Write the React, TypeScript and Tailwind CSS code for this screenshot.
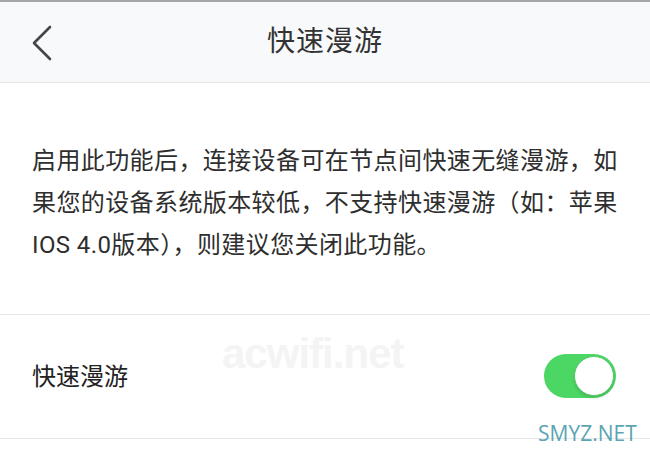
import React from "react";

export default function App() {
  const font = { fontFamily: 'Roboto, "Noto Sans CJK SC", sans-serif' };
  return (
    <div className="relative w-[650px] h-[455px] overflow-hidden bg-white" style={font}>
      <div className="h-[2px] bg-[#a6a6a6]" />
      <div className="relative h-[81px] bg-[#f8f9fb] border-b border-[#e4e5e7] flex items-center justify-center">
        <svg className="absolute left-[30px] top-[22px]" width="26" height="40" viewBox="0 0 26 40">
          <polyline points="20,3 4,19 20,35" fill="none" stroke="#454545" strokeWidth="2.6" strokeLinecap="round" strokeLinejoin="round" />
        </svg>
        <span className="text-[28px] leading-none text-[#333333] tracking-[1px]">快速漫游</span>
      </div>
      <div className="pt-[57px] pb-[48px] pl-[32px] pr-[20px] text-[24px] leading-[42px] text-[#2e2e2e] tracking-[0.4px]">
        启用此功能后，连接设备可在节点间快速无缝漫游，如<br />
        果您的设备系统版本较低，不支持快速漫游（如：苹果<br />
        IOS 4.0版本），则建议您关闭此功能。
      </div>
      <div className="h-[125px] border-t border-b border-[#e8e8e8] flex items-center justify-between pl-[32px] pr-[34px]">
        <span className="text-[24px] leading-none text-[#222222]">快速漫游</span>
        <div className="relative w-[72px] h-[44px] rounded-full bg-[#4cd663] mt-[-2px]">
          <div className="absolute right-[2px] top-[2px] w-[40px] h-[40px] rounded-full bg-white border border-[#5cc46e] shadow-[0_2px_3px_rgba(0,0,0,0.12)]" />
        </div>
      </div>
      <div className="absolute left-[222px] top-[333px] text-[42px] leading-none font-bold text-[#f4f4f4] pointer-events-none tracking-[-1px]" style={{ fontFamily: '"Liberation Sans", Arial, sans-serif' }}>
        acwifi.net
      </div>
      <div className="absolute left-[538px] top-[423px] text-[21px] leading-none text-[#5aa4b3]" style={{ fontFamily: '"Open Sans", sans-serif' }}>
        SMYZ.NET
      </div>
    </div>
  );
}
